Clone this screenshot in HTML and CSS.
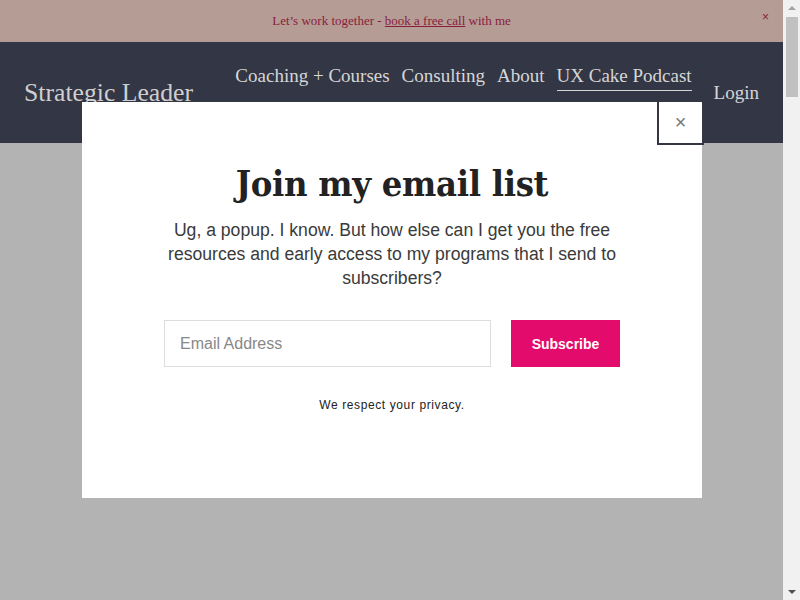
FILE: index.html
```html
<!DOCTYPE html>
<html lang="en">
<head>
    <meta charset="UTF-8">
    <meta name="viewport" content="width=device-width, initial-scale=1.0">
    <title>Strategic Leader</title>
    <link rel="stylesheet" href="styles.css">
</head>
<body>
    <div class="site">
        <div class="announce">
            <span>Let’s work together - <a href="#">book a free call</a> with me</span>
            <button class="announce-close">×</button>
        </div>

        <header class="site-header">
            <a class="logo" href="#">Strategic Leader</a>
            <nav class="nav">
                <a href="#">Coaching + Courses</a>
                <a href="#">Consulting</a>
                <a href="#">About</a>
                <a href="#" class="active">UX Cake Podcast</a>
                <a href="#" class="login">Login</a>
            </nav>
        </header>

        <main class="page"></main>

        <div class="overlay">
            <div class="modal">
                <button class="modal-close">×</button>
                <h2>Join my email list</h2>
                <p class="lead">Ug, a popup. I know. But how else can I get you the free resources and early access to my programs that I send to subscribers?</p>
                <form class="signup">
                    <input type="email" placeholder="Email Address">
                    <button type="button">Subscribe</button>
                </form>
                <p class="privacy">We respect your privacy.</p>
            </div>
        </div>
    </div>

    <!-- page scrollbar -->
    <div class="scrollbar">
        <span class="arrow up"></span>
        <span class="thumb"></span>
        <span class="arrow down"></span>
    </div>
</body>
</html>
```

FILE: styles.css
```css
html, body { margin: 0; padding: 0; }
body { font-family: "Liberation Serif", serif; display: flex; height: 600px; overflow: hidden; }

.site { flex: 1; position: relative; display: flex; flex-direction: column; background-color: #b3b3b3; }

.announce { height: 42px; flex-shrink: 0; background-color: #b59d96; display: flex; align-items: center; justify-content: center; position: relative; font-size: 13px; color: #8a1c3c; }
.announce a { color: #8a1c3c; }
.announce-close { position: absolute; right: 14px; top: 10px; background: none; border: none; color: #8a1c3c; font-size: 12px; cursor: pointer; padding: 0; }

.site-header { height: 101px; flex-shrink: 0; background-color: #333645; display: flex; justify-content: space-between; padding: 0 24px; }
.logo { color: #cfcfcf; text-decoration: none; font-size: 25.7px; margin-top: 36px; }
.nav { display: flex; gap: 12px; padding-top: 23px; }
.nav a { color: #d6d6d6; text-decoration: none; font-size: 19px; height: 25px; }
.nav a.active { border-bottom: 1px solid #d6d6d6; }
.nav a.login { margin-top: 17px; margin-left: 10px; }

.page { flex: 1; }

.overlay { position: absolute; top: 0; left: 0; right: 0; bottom: 0; }
.modal { position: absolute; left: 82px; top: 102px; width: 620px; height: 396px; background-color: #fff; box-sizing: border-box; padding-top: 60px; text-align: center; font-family: "Liberation Sans", Arial, sans-serif; }
.modal-close { position: absolute; right: -2px; top: 0; width: 47px; height: 43px; box-sizing: border-box; background: #fff; border: 2px solid #333645; border-top: none; color: #777; font-size: 20px; cursor: pointer; }
.modal h2 { font-family: "DejaVu Serif Condensed", "DejaVu Serif", serif; font-stretch: condensed; font-size: 36px; font-weight: bold; color: #222; margin: 0 0 14px; letter-spacing: -0.3px; }
.lead { font-size: 17.6px; line-height: 24px; color: #3a3a3a; margin: 0 auto; width: 470px; }
.signup { display: flex; justify-content: center; gap: 20px; margin-top: 30px; }
.signup input { width: 327px; height: 47px; box-sizing: border-box; border: 1px solid #ddd; padding: 0 15px; font-size: 16px; font-family: "Liberation Sans", Arial, sans-serif; }
.signup input::placeholder { color: #888; }
.signup button { width: 109px; height: 47px; border: none; background-color: #e30b6b; color: #fff; font-weight: bold; font-size: 14px; font-family: "Liberation Sans", Arial, sans-serif; }
.privacy { font-size: 12px; letter-spacing: 0.6px; color: #222; margin-top: 31px; }

.scrollbar { width: 17px; flex-shrink: 0; background-color: #f1f1f1; display: flex; flex-direction: column; align-items: center; }
.arrow { width: 0; height: 0; border-left: 4px solid transparent; border-right: 4px solid transparent; margin: 6px 0; }
.arrow.up { border-bottom: 4px solid #a3a3a3; }
.arrow.down { border-top: 4px solid #505050; }
.thumb { width: 12px; flex: 0 0 80px; margin-top: 1px; background-color: #c1c1c1; }
.arrow.down { margin-top: auto; margin-bottom: 6px; }
```
